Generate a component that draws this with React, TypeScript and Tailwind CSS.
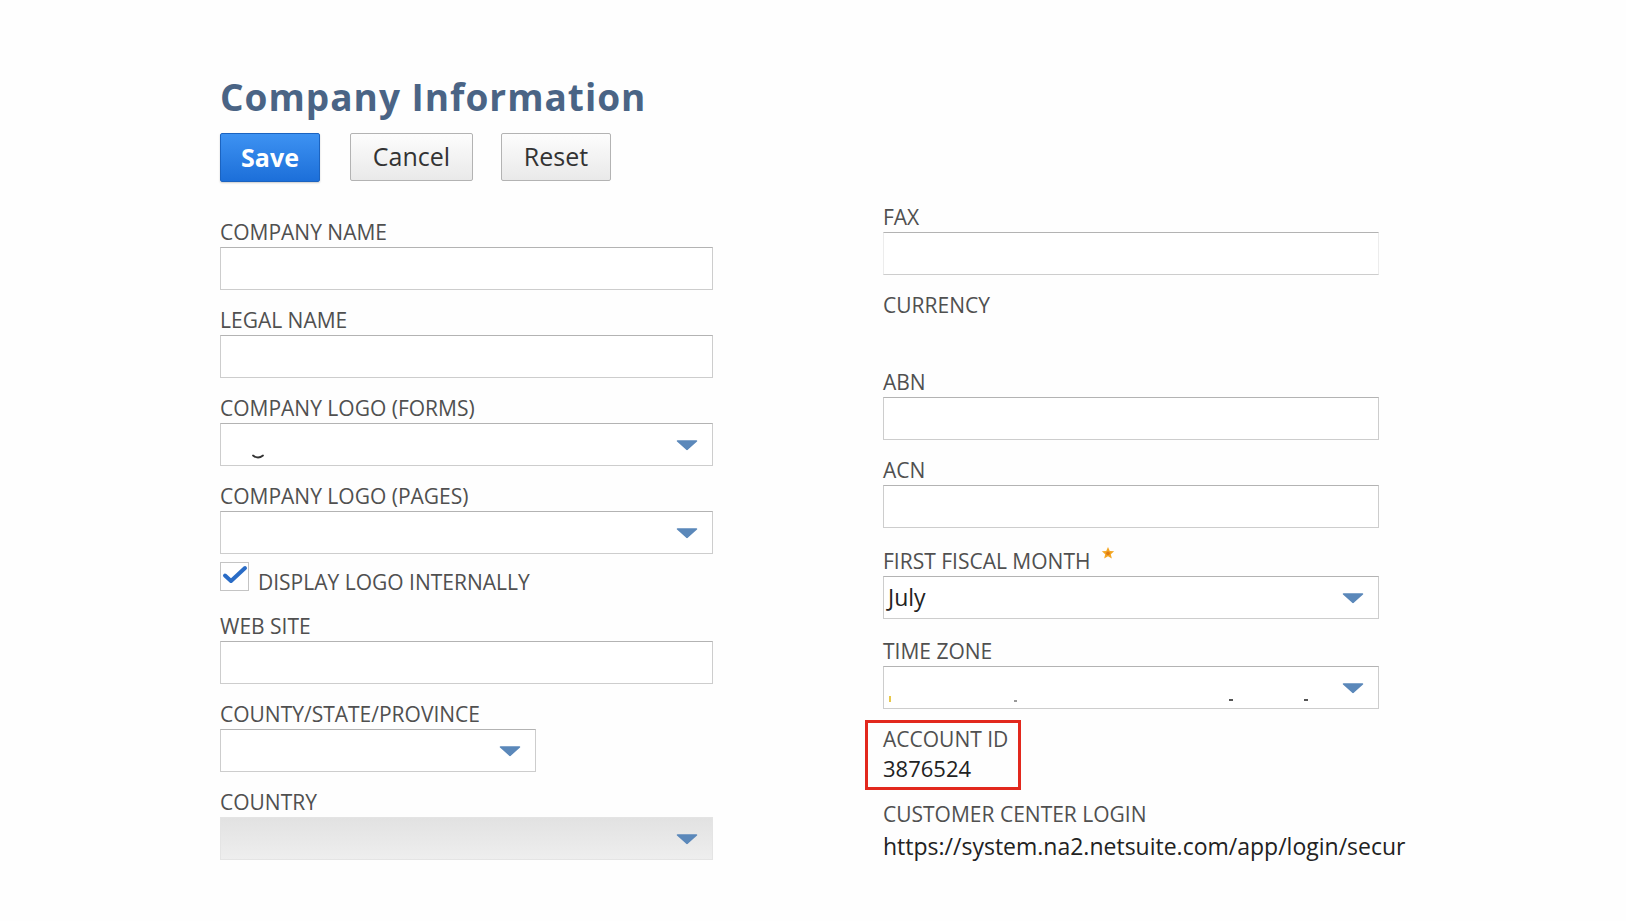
import type { ReactNode } from "react"

function Arrow() {
	return (
		<svg width="22" height="11" viewBox="0 0 22 11" className="absolute right-[14px] top-1/2 -translate-y-1/2">
			<path d="M1.5 1.5 H20.5 L11 10 Z" fill="#5b88ba" stroke="#5b88ba" strokeWidth="1.5" strokeLinejoin="round" />
		</svg>
	)
}

function Field({ label, children, className = "", star = false }: { label: string; children?: ReactNode; className?: string; star?: boolean }) {
	return (
		<div className={className}>
			<div className="flex items-start text-[21px] leading-[24px] text-[#505050] mb-[3px] whitespace-nowrap">
				{label}
				{star && (
					<svg width="14" height="14" viewBox="0 0 24 24" className="ml-[11px] -mt-[3px]">
						<path d="M12 1.5 L15 8.6 L22.6 9.2 L16.8 14.2 L18.6 21.6 L12 17.6 L5.4 21.6 L7.2 14.2 L1.4 9.2 L9 8.6 Z" fill="#f3a623" />
						<circle cx="12" cy="12.5" r="3.2" fill="#e07b12" />
					</svg>
				)}
			</div>
			{children}
		</div>
	)
}

function TextBox({ className = "" }: { className?: string }) {
	return <div className={`h-[43px] bg-white border border-[#cdcdcd] border-t-[#b3b3b3] ${className}`} />
}

function Select({ value, className = "", children }: { value?: string; className?: string; children?: ReactNode }) {
	return (
		<div className={`relative h-[43px] bg-white border border-[#cdcdcd] border-t-[#b3b3b3] flex items-center pl-[4px] ${className}`}>
			{value && <span className="text-[23px] text-[#222]">{value}</span>}
			{children}
			<Arrow />
		</div>
	)
}

export default function App() {
	return (
		<div className="min-h-screen bg-[#fefefe] font-['Open_Sans',sans-serif]">
			<div className="flex pl-[220px] pt-[77px]">
				{/* Left column */}
				<div className="w-[493px] flex flex-col">
					<h1 className="text-[37px] leading-[40px] font-bold text-[#4a6485] tracking-[1px] whitespace-nowrap">
						Company Information
					</h1>
					<div className="flex mt-[16px] h-[49px]">
						<button className="w-[100px] h-[49px] rounded-[2px] border border-[#1b63c0] bg-gradient-to-b from-[#3d92f2] to-[#1c6fd9] text-white text-[25px] font-bold shadow-[0_1px_2px_rgba(0,0,0,0.2)]">
							Save
						</button>
						<button className="ml-[30px] w-[123px] h-[48px] rounded-[2px] border border-[#b3b3b3] bg-gradient-to-b from-[#fdfdfd] to-[#e9e9e9] text-[#333] text-[25px] font-medium">
							Cancel
						</button>
						<button className="ml-[28px] w-[110px] h-[48px] rounded-[2px] border border-[#b3b3b3] bg-gradient-to-b from-[#fdfdfd] to-[#e9e9e9] text-[#333] text-[25px] font-medium">
							Reset
						</button>
					</div>

					<Field label="COMPANY NAME" className="mt-[38px]"><TextBox /></Field>
					<Field label="LEGAL NAME" className="mt-[18px]"><TextBox /></Field>
					<Field label="COMPANY LOGO (FORMS)" className="mt-[18px]">
						<Select>
							<svg width="14" height="6" viewBox="0 0 14 6" className="ml-[26px] mt-[24px]">
								<path d="M2 1.5 Q7 5.5 12 1.5" stroke="#333" strokeWidth="1.8" fill="none" strokeLinecap="round" />
							</svg>
						</Select>
					</Field>
					<Field label="COMPANY LOGO (PAGES)" className="mt-[18px]"><Select /></Field>

					<div className="flex items-end mt-[8px]">
						<div className="relative w-[29px] h-[29px] border border-[#c4c4c4] bg-white">
							<svg width="29" height="29" viewBox="0 0 29 29" className="absolute left-0 top-0">
								<path d="M4 12.5 L10 18 L24 5" stroke="#2a6cc6" strokeWidth="4" fill="none" strokeLinecap="round" strokeLinejoin="round" />
							</svg>
						</div>
						<span className="ml-[9px] text-[21px] leading-[24px] text-[#505050] -mb-[3px]">DISPLAY LOGO INTERNALLY</span>
					</div>

					<Field label="WEB SITE" className="mt-[23px]"><TextBox /></Field>
					<Field label="COUNTY/STATE/PROVINCE" className="mt-[18px]"><Select className="w-[316px]" /></Field>
					<Field label="COUNTRY" className="mt-[18px]">
						<Select className="!bg-gradient-to-b from-[#e2e2e2] to-[#eeeeee] !border-[#e4e4e4]" />
					</Field>
				</div>

				{/* Right column */}
				<div className="ml-[170px] mt-[128px] w-[496px] flex flex-col">
					<Field label="FAX"><TextBox className="border-x-[#ececec]" /></Field>
					<Field label="CURRENCY" className="mt-[18px]"><div className="h-[32px]" /></Field>
					<Field label="ABN" className="mt-[18px]"><TextBox /></Field>
					<Field label="ACN" className="mt-[18px]"><TextBox /></Field>
					<Field label="FIRST FISCAL MONTH" star className="mt-[21px]"><Select value="July" /></Field>
					<Field label="TIME ZONE" className="mt-[20px]">
						<Select>
							<span className="absolute left-[5px] bottom-[6px] w-[2px] h-[6px] bg-[#e8c84a]" />
							<span className="absolute left-[130px] bottom-[6px] w-[3px] h-[2px] bg-[#999]" />
							<span className="absolute left-[345px] bottom-[7px] w-[4px] h-[2px] bg-[#555]" />
							<span className="absolute left-[420px] bottom-[7px] w-[4px] h-[2px] bg-[#555]" />
						</Select>
					</Field>

					<div className="relative mt-[18px]">
						<div className="absolute -left-[18px] -top-[7px] w-[156px] h-[70px] border-[3px] border-[#e2281d]" />
						<div className="text-[21px] leading-[24px] text-[#505050]">ACCOUNT ID</div>
						<div className="mt-[3px] text-[22px] leading-[28px] text-[#222]">3876524</div>
					</div>

					<div className="mt-[20px] text-[21px] leading-[24px] text-[#505050] whitespace-nowrap">CUSTOMER CENTER LOGIN</div>
					<div className="mt-[6px] whitespace-nowrap text-[23px] leading-[28px] text-[#222]">
						https://system.na2.netsuite.com/app/login/secur
					</div>
				</div>
			</div>
		</div>
	)
}
